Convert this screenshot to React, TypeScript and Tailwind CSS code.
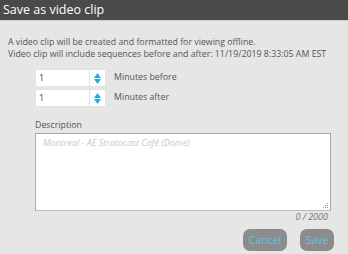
function Spinner({ value }: { value: string }) {
  return (
    <div className="flex h-[18px] w-[71px] bg-white border border-[#e2e2e2]">
      <div className="flex-1 flex items-center pl-[3px] text-[9px] text-[#444]">{value}</div>
      <div className="w-[16px] border-l border-[#e2e2e2] flex flex-col items-center justify-center gap-[1px]">
        <svg width="7" height="5" viewBox="0 0 7 5">
          <path d="M3.5 0L7 5H0z" fill="#2aa9e0" />
        </svg>
        <svg width="7" height="5" viewBox="0 0 7 5">
          <path d="M0 0H7L3.5 5z" fill="#2aa9e0" />
        </svg>
      </div>
    </div>
  );
}

export default function App() {
  return (
    <div className="w-[348px] h-[254px] bg-[#e6e6e6] font-['Open_Sans',sans-serif] overflow-hidden">
      {/* Header */}
      <div className="h-[21px] bg-[#4a4a4a] border-b border-[#d2d2d2] flex items-center pl-[3px]">
        <span className="text-white text-[12.5px] leading-none">Save as video clip</span>
      </div>

      <div className="pl-[8px] pt-[15px] text-[8.8px] leading-[12px] text-[#555]">
        <p>A video clip will be created and formatted for viewing offline.</p>
        <p>Video clip will include sequences before and after: 11/19/2019 8:33:05 AM EST</p>
      </div>

      <div className="pl-[35px] pt-[9px] flex flex-col gap-[2px]">
        <div className="flex items-center gap-[8px]">
          <Spinner value="1" />
          <span className="text-[8.8px] text-[#555]">Minutes before</span>
        </div>
        <div className="flex items-center gap-[8px]">
          <Spinner value="1" />
          <span className="text-[8.8px] text-[#555]">Minutes after</span>
        </div>
      </div>

      <div className="pl-[35px] pr-[17px] pt-[12px]">
        <div className="text-[8.8px] text-[#555] leading-[12px] mb-[2px]">Description</div>
        <div className="relative h-[78px] bg-white border border-[#a8a8a8] border-b-[#bcbcbc] px-[7px] leading-[12px]">
          <span className="text-[9px] italic text-[#c8c8c8]">Montreal - AE Stratocast Café (Dome)</span>
          <svg className="absolute right-[2px] bottom-[2px]" width="5" height="5" viewBox="0 0 5 5">
            <rect x="4" y="0" width="1" height="1" fill="#999" />
            <rect x="2" y="2" width="1" height="1" fill="#999" />
            <rect x="4" y="2" width="1" height="1" fill="#999" />
            <rect x="0" y="4" width="1" height="1" fill="#999" />
            <rect x="2" y="4" width="1" height="1" fill="#999" />
            <rect x="4" y="4" width="1" height="1" fill="#999" />
          </svg>
        </div>
        <div className="text-right text-[9px] leading-[11px] italic text-[#777] pr-[3px]">0 / 2000</div>
      </div>

      <div className="flex justify-end gap-[13px] pr-[14px] pt-[7px]">
        <button className="h-[22px] w-[44px] rounded-[7px] bg-[#8c8c8c] text-[#5ec4ee] text-[10.5px] leading-none">Cancel</button>
        <button className="h-[22px] w-[34px] rounded-[7px] bg-[#8c8c8c] text-[#5ec4ee] text-[10.5px] leading-none">Save</button>
      </div>
    </div>
  );
}
